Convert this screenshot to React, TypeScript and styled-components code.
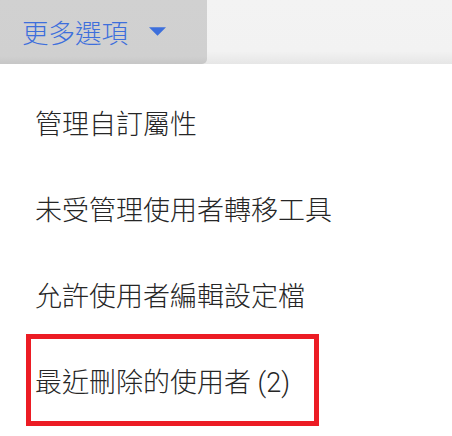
import React from "react";
import styled, { createGlobalStyle } from "styled-components";

const GlobalStyle = createGlobalStyle`
    body {
        margin: 0;
        background: #ffffff;
        font-family: Roboto, "Noto Sans CJK TC", sans-serif;
    }
`;

const items = ["管理自訂屬性", "未受管理使用者轉移工具", "允許使用者編輯設定檔", "最近刪除的使用者 (2)"];

export default function App() {
    return (
        <>
            <GlobalStyle />
            <StyledPage>
                <StyledBar>
                    <StyledMoreButton>
                        更多選項
                        <StyledCaret viewBox="0 0 18 9" aria-hidden>
                            <path d="M0 0 L18 0 L9 9 Z" fill="currentColor" />
                        </StyledCaret>
                    </StyledMoreButton>
                </StyledBar>
                <StyledMenu>
                    {items.map((label, i) => (
                        <StyledItem key={label} $highlighted={i === items.length - 1}>
                            {label}
                        </StyledItem>
                    ))}
                </StyledMenu>
            </StyledPage>
        </>
    );
}

const StyledPage = styled.div`
    width: 452px;
    height: 436px;
    overflow: hidden;
`;

const StyledBar = styled.div`
    display: flex;
    height: 64px;
    background: linear-gradient(#f3f3f3 0%, #f2f2f2 80%, #e6e6e6 100%);
`;

const StyledMoreButton = styled.button`
    display: flex;
    align-items: center;
    gap: 21px;
    width: 207px;
    height: 64px;
    padding: 0 0 2px 22px;
    border: none;
    border-bottom-right-radius: 5px;
    background: linear-gradient(#d1d1d1 0%, #d0d0d0 88%, #c6c6c6 100%);
    color: #3d6fdc;
    font-family: Roboto, "Noto Sans CJK TC", sans-serif;
    font-size: 26.5px;
    font-weight: 300;
    cursor: pointer;
`;

const StyledCaret = styled.svg`
    width: 17px;
    height: 9px;
    margin-top: 1px;
`;

const StyledMenu = styled.ul`
    list-style: none;
    margin: 0;
    padding: 15px 0 0 29px;
`;

const StyledItem = styled.li<{ $highlighted?: boolean }>`
    display: flex;
    align-items: center;
    box-sizing: border-box;
    height: 86px;
    width: ${(p) => (p.$highlighted ? "287px" : "auto")};
    padding: 0 6px;
    color: #262626;
    font-size: 27px;
    font-weight: 300;
    outline: ${(p) => (p.$highlighted ? "5px solid #ec1c24" : "none")};
    outline-offset: -2px;
`;
